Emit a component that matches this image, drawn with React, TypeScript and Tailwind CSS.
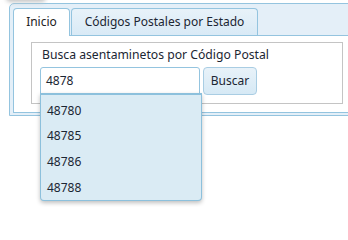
export default function App() {
	const items = ["48780", "48785", "48786", "48788"];
	return (
		<div className="relative h-[207px] w-[348px] overflow-hidden bg-white text-[12px] text-[#1b2633]" style={{ fontFamily: '"Noto Sans", "DejaVu Sans", sans-serif' }}>
			{/* shadow of something above */}
			<div className="absolute left-[6px] top-[-7px] h-[9px] w-[40px] rounded-full bg-[#c4c4c4] blur-[2px]" />

			{/* TABS WIDGET */}
			<div className="ml-[9px] mt-[3px] w-[360px] rounded-tl-[5px] border border-[#94c4df] bg-[#e4eff8] pl-[3px] pt-[4px] pb-[2px]">
				{/* NAV */}
				<div className="relative z-10 -mb-px flex items-start gap-[1px]">
					<div className="flex h-[28px] w-[57px] items-center justify-center rounded-t-[4px] border border-b-0 border-[#94c4df] bg-white pb-[1px] text-[#222]">
						Inicio
					</div>
					<div className="flex h-[27px] w-[187px] items-center justify-center rounded-t-[4px] border border-b-0 border-[#94c4df] bg-gradient-to-b from-[#e8f2f9] to-[#d9eaf6]">
						Códigos Postales por Estado
					</div>
				</div>

				{/* PANEL */}
				<div className="border border-[#94c4df] bg-white pl-[17px] pt-[6px] pb-[8px]">
					<div className="w-[312px] border border-[#c4c4c4] pb-[8px] pl-[8px] pt-[3px]">
						<div className="ml-[2px] text-[12.2px] leading-[18px]">Busca asentaminetos por Código Postal</div>
						<div className="mt-[3px] flex items-start">
							<div className="relative">
								<div className="flex h-[28px] w-[160px] items-center rounded-t-[3px] border border-[#94c4df] bg-white pl-[5px]">
									4878
								</div>
								{/* AUTOCOMPLETE MENU */}
								<div className="absolute left-0 top-[26px] z-20 w-[162px] rounded-b-[4px] border border-t-2 border-[#8cc0dc] bg-[#daebf4] pt-[3px] shadow-[0_2px_4px_rgba(0,0,0,0.25)]">
									{items.map((n) => (
										<div key={n} className="flex h-[25.6px] items-center pl-[6px]">
											{n}
										</div>
									))}
								</div>
							</div>
							<button className="ml-[3px] h-[28px] w-[54px] rounded-[4px] border border-[#a9cde3] bg-gradient-to-b from-[#e8f2f9] to-[#d6e9f5] text-[12px]">
								Buscar
							</button>
						</div>
					</div>
				</div>
			</div>
		</div>
	);
}
